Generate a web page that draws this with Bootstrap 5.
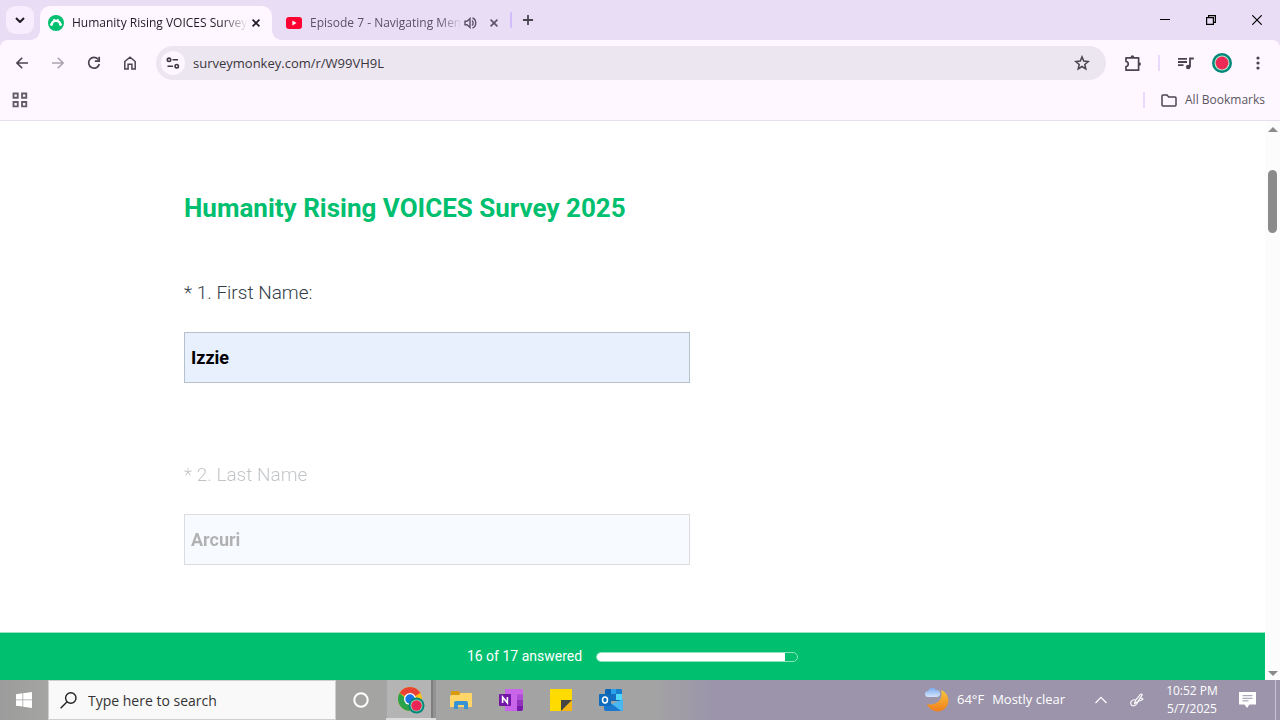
<!DOCTYPE html>
<html lang="en">
<head>
<meta charset="utf-8">
<meta name="viewport" content="width=device-width, initial-scale=1">
<title>Humanity Rising VOICES Survey 2025</title>
<link href="https://cdn.jsdelivr.net/npm/bootstrap@5.3.0/dist/css/bootstrap.min.css" rel="stylesheet">
<style>
  body { font-family: "Open Sans", "Noto Sans", sans-serif; background: #fff; color: #1f1b24; }
  svg { display: block; flex: none; }
  button { color: inherit; }
  .plain { background: none; border: 0; padding: 0; display: flex; align-items: center; justify-content: center; flex: none; }

  /* browser chrome */
  .tabstrip { height: 40px; background: #e9ddf5; font-size: 12px; }
  .tab-menu { width: 28px; height: 28px; margin: 0 6px; border-radius: 9px; background: #f8ecff; }
  .page-tab { height: 34px; padding: 0 8px; color: #5a5266; }
  .page-tab.current { position: relative; width: 232px; background: #fef7ff; color: #1f1b24; border-radius: 10px 10px 0 0; }
  .page-tab.current::before, .page-tab.current::after { content: ""; position: absolute; bottom: 0; width: 10px; height: 10px; }
  .page-tab.current::before { right: 100%; background: radial-gradient(circle at 0 0, transparent 10px, #fef7ff 10px); }
  .page-tab.current::after { left: 100%; background: radial-gradient(circle at 100% 0, transparent 10px, #fef7ff 10px); }
  .audible { width: 232px; margin-left: 6px; }
  .tab-title { flex: 1; min-width: 0; overflow: hidden; white-space: nowrap; line-height: 20px; -webkit-mask-image: linear-gradient(90deg, #000 85%, transparent); mask-image: linear-gradient(90deg, #000 85%, transparent); }
  .tab-btn { width: 16px; height: 16px; }
  .rule { width: 2px; height: 16px; background: #e8dafd; }
  .tabstrip .rule { background: #d3bcfd; }
  .win-btn { width: 46px; height: 40px; color: #000; }
  .tools { height: 46px; background: #fef7ff; color: #49454f; border-radius: 8px 8px 0 0; }
  .tool-btn { width: 36px; height: 34px; }
  .toolback { background: #e9ddf5; }
  .omnibox { height: 34px; border-radius: 17px; background: #ece6f0; padding: 0 16px 0 5px; }
  .site-info { width: 24px; height: 24px; border-radius: 50%; background: #fef7ff; }
  .omnibox input { border: 0; background: none; outline: 0; flex: 1; min-width: 0; padding: 0; font-size: 13px; line-height: 20px; color: #3a3640; }
  .bookmarks { height: 35px; background: #fef7ff; border-bottom: 1px solid #e7e0ec; color: #49454f; font-size: 12px; padding: 0 15px 6px 12px; }
  .bookmarks a { color: #5a5662; }

  /* survey page */
  .survey { font-family: Roboto, "Liberation Sans", sans-serif; }
  .survey-body { max-width: 897px; padding: 69px 0 65px; }
  .survey h1 { font-size: 26px; line-height: 36px; font-weight: 700; color: #00bf6f; margin: 0 0 53px; }
  .question { margin-bottom: 78px; }
  .question:last-child { margin-bottom: 0; }
  .question label { display: block; font-size: 19px; line-height: 28px; font-weight: 300; color: #333e48; margin-bottom: 25px; }
  .question input { max-width: 506px; height: 51px; padding: 0 6px; border: 1px solid #b5c1ca; border-radius: 0; background: #e8effd; font-size: 18px; font-weight: 700; color: #000; }
  .dimmed { opacity: .3; }
  .dimmed input { border-color: #8d8d99; }
  .survey-foot { background: #00bf6f; color: #fff; height: 48px; gap: 14px; font-size: 14px; border-top: 1px solid #9be4c3; }
  .meter { width: 202px; height: 10px; border: 1px solid #8fe2bd; border-radius: 5px; background: none; }
  .meter .progress-bar { background: #fff; }
  .scroller { width: 15px; background: #fcfcfc; padding: 5px 0 3px; color: #8b8b8b; }
  .thumb { width: 9px; height: 63px; border-radius: 5px; background: #8b8b8b; margin-top: 37px; }

  /* taskbar */
  .taskbar { height: 40px; color: #fff; background: linear-gradient(90deg, #9c9c9c 0, #a5a5a3 4%, #a3a3a3 51%, #9b94ab 56%, #9b94ab 100%); font-size: 13px; }
  .start { width: 48px; height: 40px; }
  .search-box { width: 288px; height: 40px; background: #f9f9f9; border: 1px solid #cfcfcf; padding: 0 11px; gap: 11px; color: #222; }
  .search-box input { border: 0; background: none; outline: 0; flex: 1; min-width: 0; padding: 0; font-size: 14px; color: #222; }
  .search-box input::placeholder { color: #333; opacity: 1; }
  .task { width: 50px; height: 40px; }
  .task.running { background: linear-gradient(90deg, transparent 1px, #b4b4b4 1px, #b4b4b4 45px, #7e7e7e 45px, #7e7e7e 47px, #929292 47px); box-shadow: inset 0 -2px #dcdcdc; }
  .weather { gap: 8px; margin-right: 18px; }
  .tray { width: 36px; height: 40px; }
  .clock { width: 74px; font-size: 12px; line-height: 18px; }
  .peek { width: 5px; height: 40px; border-left: 1px solid #c8c3d1; margin-left: 10px; }
</style>
</head>
<body>
<div class="d-flex flex-column min-vh-100">
  <header>
    <div class="tabstrip d-flex align-items-center">
      <button class="plain tab-menu" aria-label="Search tabs"><svg width="10" height="6" viewBox="0 0 10 6" fill="none" stroke="currentColor" stroke-width="2"><path d="M1 1l4 4 4-4"/></svg></button>
      <div class="page-tab current d-flex align-items-center align-self-end">
        <svg width="16" height="16" viewBox="0 0 16 16"><circle cx="8" cy="8" r="8" fill="#00bf6f"/><path d="M3.600 9.800C4.200 4.600 11.800 4.600 12.400 9.800" fill="none" stroke="#fff" stroke-width="2.200"/><path d="M5.300 4.300l2 .8M10.700 4.300l-2 .8" stroke="#fff" stroke-width="1.200"/><circle cx="3.500" cy="9.600" r="1.400" fill="#fff"/><circle cx="12.500" cy="9.600" r="1.400" fill="#fff"/></svg>
        <span class="tab-title ms-2">Humanity Rising VOICES Survey</span>
        <button class="plain tab-btn" aria-label="Close tab"><svg width="8" height="8" viewBox="0 0 8 8" stroke="currentColor" stroke-width="1.700"><path d="M.6.6l6.800 6.800M7.400.6L.6 7.400"/></svg></button>
      </div>
      <div class="page-tab audible d-flex align-items-center align-self-end">
        <svg width="16" height="12" viewBox="0 0 16 12"><rect width="16" height="12" rx="3" fill="#ff0033"/><path d="M6.400 3.600v4.800L10.500 6z" fill="#fff"/></svg>
        <span class="tab-title ms-2">Episode 7 - Navigating Men</span>
        <button class="plain tab-btn me-2" aria-label="Mute tab"><svg width="13" height="12" viewBox="0 0 13 12" fill="none" stroke="currentColor" stroke-width="1.400"><path d="M1 4.300h2L6 1.600v8.800L3 7.700H1z"/><path d="M8 3.700c1.500 1 1.500 3.600 0 4.600M8.500 1c4.300 1.600 4.300 8.400 0 10"/></svg></button>
        <button class="plain tab-btn" aria-label="Close tab"><svg width="8" height="8" viewBox="0 0 8 8" stroke="currentColor" stroke-width="1.600"><path d="M.6.6l6.800 6.800M7.400.6L.6 7.400"/></svg></button>
      </div>
      <span class="rule me-2"></span>
      <button class="plain tab-btn" aria-label="New tab"><svg width="10" height="10" viewBox="0 0 10 10" stroke="#49454f" stroke-width="1.800"><path d="M5 0v10M0 5h10"/></svg></button>
      <div class="d-flex ms-auto">
        <button class="plain win-btn" aria-label="Minimize"><svg width="10" height="10" viewBox="0 0 10 10" stroke="currentColor"><path d="M0 4.500h10"/></svg></button>
        <button class="plain win-btn" aria-label="Restore"><svg width="10" height="10" viewBox="0 0 10 10" fill="none" stroke="currentColor" stroke-width="1.200"><path d="M.6 2.600h6.800v6.800H.6zM2.600 2.600V.6h6.800v6.800h-2"/></svg></button>
        <button class="plain win-btn" aria-label="Close"><svg width="10" height="10" viewBox="0 0 10 10" stroke="currentColor" stroke-width="1.200"><path d="M.3.3l9.400 9.400M9.700.3L.3 9.700"/></svg></button>
      </div>
    </div>
    <div class="toolback">
    <div class="tools d-flex align-items-center px-1">
      <button class="plain tool-btn" aria-label="Back"><svg width="12" height="12" viewBox="0 0 12 12" fill="none" stroke="currentColor" stroke-width="1.600"><path d="M12 6H1.200M6.200.8L1 6l5.200 5.200"/></svg></button>
      <button class="plain tool-btn" aria-label="Forward"><svg width="12" height="12" viewBox="0 0 12 12" fill="none" stroke="#aaa5ae" stroke-width="1.600"><path d="M0 6h10.800M5.800.8L11 6l-5.200 5.200"/></svg></button>
      <button class="plain tool-btn" aria-label="Reload"><svg width="14" height="14" viewBox="0 0 14 14" fill="none" stroke="currentColor" stroke-width="1.700"><path d="M11.400 3.600A5.400 5.400 0 1 0 12.300 8"/><path d="M12.200.8v4.400H7.800"/></svg></button>
      <button class="plain tool-btn" aria-label="Home"><svg width="14" height="14" viewBox="0 0 14 14" fill="none" stroke="currentColor" stroke-width="1.500"><path d="M1.800 5.500L7 1.200l5.200 4.300v7.600H8.900V8.300H5.100v4.800H1.800z"/></svg></button>
      <div class="omnibox d-flex align-items-center flex-fill ms-2">
        <button class="plain site-info me-2" aria-label="Site information"><svg width="14" height="12" viewBox="0 0 14 12" fill="none" stroke="#3c3843" stroke-width="1.600"><circle cx="3" cy="2.800" r="1.700"/><path d="M6.500 2.800H12M1.500 9.200H7"/><circle cx="10.700" cy="9.200" r="1.700"/></svg></button>
        <input type="text" aria-label="Address" value="surveymonkey.com/r/W99VH9L">
        <button class="plain tab-btn" aria-label="Bookmark this page"><svg width="16" height="16" viewBox="0 0 16 16" fill="none" stroke="#49454f" stroke-width="1.500"><path d="M8 1.900l1.700 4.200 4.500.4-3.400 3 1 4.400L8 11.500l-3.800 2.400 1-4.400-3.400-3 4.500-.4z"/></svg></button>
      </div>
      <button class="plain tool-btn ms-2" aria-label="Extensions"><svg width="20" height="18" viewBox="0 0 20 18" fill="none" stroke="currentColor" stroke-width="1.700"><path d="M4 3.800h12.600v12.400H4v-3.700c3-.4 3-4.600 0-5z" stroke-linejoin="round"/><path d="M8.600 3.400c0-2.800 3.600-2.800 3.600 0zM17 8.200c2.600 0 2.600 3.600 0 3.600z" fill="currentColor" stroke="none"/></svg></button>
      <span class="rule mx-2"></span>
      <button class="plain tool-btn" aria-label="Media controls"><svg width="16" height="13" viewBox="0 0 16 13" fill="none" stroke="currentColor" stroke-width="1.800"><path d="M0 1.800h9M0 5h9M0 8.200h5.500M12 10V1.500h3.800"/><circle cx="10.200" cy="10" r="2.300" fill="currentColor" stroke="none"/></svg></button>
      <button class="plain tool-btn" aria-label="Profile"><svg width="20" height="20" viewBox="0 0 20 20"><circle cx="10" cy="10" r="10" fill="#00897b"/><circle cx="10" cy="10" r="7.500" fill="#b9e8c9"/><circle cx="10" cy="10" r="6.400" fill="#ef2a56"/><circle cx="10" cy="10" r="4.500" fill="none" stroke="#b32150" stroke-width=".8" stroke-dasharray="1 2.500"/></svg></button>
      <button class="plain tool-btn" aria-label="Menu"><svg width="4" height="14" viewBox="0 0 4 14" fill="currentColor"><circle cx="2" cy="2" r="1.600"/><circle cx="2" cy="7" r="1.600"/><circle cx="2" cy="12" r="1.600"/></svg></button>
    </div>
    </div>
    <div class="bookmarks d-flex align-items-center">
      <button class="plain tab-btn" aria-label="Apps"><svg width="16" height="16" viewBox="0 0 15 15" fill="none" stroke="#615c68" stroke-width="1.700"><path d="M1.400 1.400h4v4h-4zM9.400 1.400h4v4h-4zM1.400 9.400h4v4h-4zM9.400 9.400h4v4h-4z"/></svg></button>
      <span class="rule ms-auto me-3"></span>
      <a href="#" class="d-flex align-items-center gap-2 text-decoration-none"><svg width="16" height="13" viewBox="0 0 16 13" fill="none" stroke="#49454f" stroke-width="1.500"><path d="M1 11V2q0-1 1-1h4l1.700 1.900H14q1 0 1 1V11q0 1-1 1H2q-1 0-1-1z"/></svg>All Bookmarks</a>
    </div>
  </header>

  <div class="d-flex flex-fill">
    <div class="survey d-flex flex-column flex-fill">
      <main class="survey-body container-fluid flex-fill">
        <h1>Humanity Rising VOICES Survey 2025</h1>
        <form>
          <div class="question">
            <label for="first">* 1. First Name:</label>
            <input id="first" class="form-control" type="text" value="Izzie">
          </div>
          <div class="question dimmed">
            <label for="last">* 2. Last Name</label>
            <input id="last" class="form-control" type="text" value="Arcuri">
          </div>
        </form>
      </main>
      <footer class="survey-foot d-flex align-items-center justify-content-center">
        <span>16 of 17 answered</span>
        <div class="progress meter" role="progressbar" aria-label="Questions answered" aria-valuenow="16" aria-valuemin="0" aria-valuemax="17"><div class="progress-bar" style="width:94.1%"></div></div>
      </footer>
    </div>
    <div class="scroller d-flex flex-column align-items-center" aria-hidden="true">
      <svg width="10" height="7" viewBox="0 0 10 7" fill="currentColor"><path d="M0 6l5-5 5 5z"/></svg>
      <div class="thumb"></div>
      <svg class="mt-auto" width="10" height="7" viewBox="0 0 10 7" fill="currentColor"><path d="M0 1l5 5 5-5z"/></svg>
    </div>
  </div>

  <div class="taskbar d-flex align-items-center">
    <button class="plain start" aria-label="Start"><svg width="16" height="16" viewBox="0 0 16 16" fill="#fff"><path d="M0 2.200l6.500-.9v6.300H0zM7.200 1.200L16 0v7.600H7.200zM0 8.300h6.500v6.300L0 13.700zM7.200 8.300H16V16l-8.800-1.300z"/></svg></button>
    <div class="search-box d-flex align-items-center">
      <svg width="17" height="17" viewBox="0 0 17 17" fill="none" stroke="#222" stroke-width="1.400"><circle cx="10.800" cy="6" r="5.200"/><path d="M7.100 9.700L.6 16.300"/></svg>
      <input type="text" aria-label="Search" placeholder="Type here to search">
    </div>
    <button class="plain task" aria-label="Cortana"><svg width="16" height="16" viewBox="0 0 16 16" fill="none" stroke="#fff" stroke-width="2"><circle cx="8" cy="8" r="6.700"/></svg></button>
    <button class="plain task running" aria-label="Chrome"><svg width="28" height="28" viewBox="0 0 28 28"><circle cx="13" cy="13" r="12" fill="#fbc116"/><path d="M13 13L2.600 7A12 12 0 0 1 23.400 7z" fill="#ea4335"/><path d="M2.600 7A12 12 0 0 0 12.500 25L18.200 16H13z" fill="#2ba24c"/><circle cx="13" cy="13" r="6" fill="#fff"/><circle cx="13" cy="13" r="4.700" fill="#1a73e8"/><circle cx="19.500" cy="19.500" r="8" fill="#00897b"/><circle cx="19.500" cy="19.500" r="6" fill="#a6dcbf"/><circle cx="19.500" cy="19.500" r="5.200" fill="#e92655"/></svg></button>
    <button class="plain task" aria-label="File Explorer"><svg width="22" height="18" viewBox="0 0 22 18"><path d="M1 0h7.500L10 1.500V5H1z" fill="#d99a12"/><path d="M1 4h8l1.500-2H21q1 0 1 1v13H0V5z" fill="#ffd667"/><path d="M4 18v-6q0-2 2-2h10q2 0 2 2v6h-4v-4H8v4z" fill="#3793d6"/></svg></button>
    <button class="plain task" aria-label="OneNote"><svg width="24" height="22" viewBox="0 0 24 22"><path d="M6 0h16q2 0 2 2v18q0 2-2 2H6z" fill="#c865e8"/><path d="M18 5.500h6V11h-6z" fill="#ae4bd5"/><path d="M18 11h6v5.500h-6z" fill="#9332bf"/><path d="M18 16.500h6V20q0 2-2 2h-4z" fill="#7719aa"/><rect y="5" width="12" height="12" rx="1" fill="#7216a5"/><path d="M3.600 14V8l4.800 6V8" fill="none" stroke="#fff" stroke-width="1.600"/></svg></button>
    <button class="plain task" aria-label="Sticky Notes"><svg width="22" height="22" viewBox="0 0 22 22"><path d="M0 0h22v22H0z" fill="#ffdb00"/><path d="M11 22L22 11v11z" fill="#f4b517"/><path d="M11 22V11h11z" fill="#454545"/></svg></button>
    <button class="plain task" aria-label="Outlook"><svg width="24" height="22" viewBox="0 0 24 22"><path d="M7 0h14q2 0 2 2v10H6V1z" fill="#0a65b5"/><path d="M12 0h5v5h-5z" fill="#2ba1ea"/><path d="M17 0h4q2 0 2 2v3h-6z" fill="#1780d0"/><path d="M12 5h5v6h-5z" fill="#176fc1"/><path d="M17 5h6v6h-6z" fill="#51d8ff"/><path d="M5 11l10 5 9-6v10q0 2-2 2H7q-2 0-2-2z" fill="#1b78ce"/><path d="M24 10v10q0 2-2 2l-9-7z" fill="#49b8f1"/><rect y="5" width="12" height="12" rx="1" fill="#0f6cbd"/><ellipse cx="6" cy="11" rx="2.500" ry="2.900" fill="none" stroke="#fff" stroke-width="1.500"/></svg></button>
    <div class="weather d-flex align-items-center ms-auto">
      <svg width="24" height="24" viewBox="0 0 24 24"><defs><linearGradient id="moon" x1="0" y1="0" x2="0" y2="1"><stop stop-color="#f5c63c"/><stop offset="1" stop-color="#f27d1b"/></linearGradient><linearGradient id="cloud" x1="0" y1="0" x2="0" y2="1"><stop stop-color="#7baaf0"/><stop offset="1" stop-color="#d5e4fb"/></linearGradient></defs><path d="M16 2A11 11 0 1 1 2 16c8 2 17-3 14-14z" fill="url(#moon)"/><path d="M3 9a3 3 0 0 1 0-6 4.400 4.400 0 0 1 8-1 3.500 3.500 0 0 1 1 7z" fill="url(#cloud)"/></svg>
      <span>64°F</span><span>Mostly clear</span>
    </div>
    <button class="plain tray text-white" aria-label="Hidden icons"><svg width="12" height="8" viewBox="0 0 12 8" fill="none" stroke="currentColor" stroke-width="1.200"><path d="M.5 7L6 1.300 11.500 7"/></svg></button>
    <button class="plain tray text-white" aria-label="Windows Ink"><svg width="14" height="14" viewBox="0 0 14 14" fill="none" stroke="currentColor" stroke-width="1.100"><path d="M4.500 10.500l1-3L10.300 1.500q1.600-1.200 2 .4L7.600 8.800z"/><path d="M5.500 6.500C1 6.800.2 9.500 1 11.500s4.300 2 5.500-.5 2-4 4.500-3.500l2-1.500-3-1.500"/></svg></button>
    <div class="clock text-center">10:52 PM<br>5/7/2025</div>
    <button class="plain tray" aria-label="Notifications"><svg width="17" height="16" viewBox="0 0 17 16"><path d="M0 0h17v12.500h-6.500L8 16l-2.500-3.500H0z" fill="#fff"/><path d="M3.500 3.700h10M3.500 6.300h10M3.500 8.900h6" stroke="#9b94ab"/></svg></button>
    <div class="peek flex-shrink-0"></div>
  </div>
</div>
<script src="https://cdn.jsdelivr.net/npm/bootstrap@5.3.0/dist/js/bootstrap.bundle.min.js"></script>
</body>
</html>
